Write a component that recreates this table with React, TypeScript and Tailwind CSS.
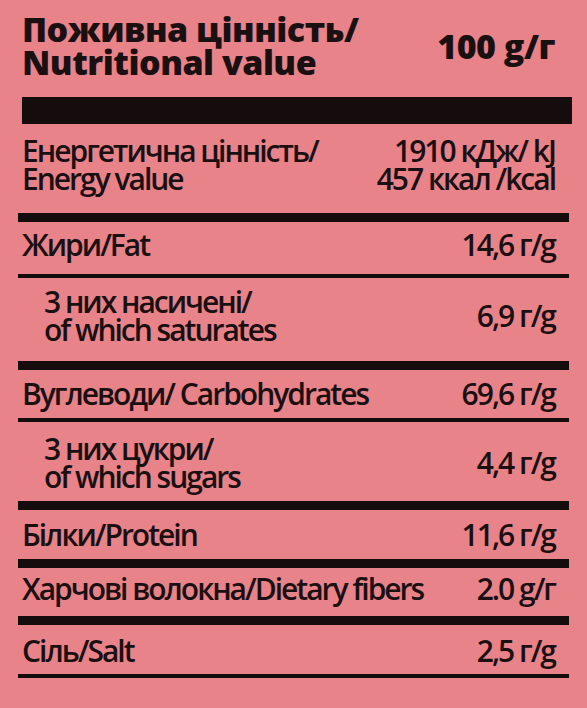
type Row = {
  label: string[];
  value: string[];
  pad: string;
  indent?: boolean;
  bar: "thick" | "thin";
};

const rows: Row[] = [
  {
    label: ["Енергетична цінність/", "Energy value"],
    value: ["1910 кДж/ kJ", "457 ккал /kcal"],
    pad: "pt-[13px] pb-[20px]",
    bar: "thick",
  },
  { label: ["Жири/Fat"], value: ["14,6 г/g"], pad: "pt-[9px] pb-[15px]", bar: "thin" },
  {
    label: ["3 них насичені/", "of which saturates"],
    value: ["6,9 г/g"],
    pad: "pt-[10px] pb-[17px]",
    indent: true,
    bar: "thick",
  },
  { label: ["Вуглеводи/ Carbohydrates"], value: ["69,6 г/g"], pad: "pt-[10px] pb-[10px]", bar: "thin" },
  {
    label: ["3 них цукри/", "of which sugars"],
    value: ["4,4 г/g"],
    pad: "pt-[13px] pb-[10px]",
    indent: true,
    bar: "thick",
  },
  { label: ["Білки/Protein"], value: ["11,6 г/g"], pad: "pt-[11px] pb-[10px]", bar: "thick" },
  { label: ["Харчові волокна/Dietary fibers"], value: ["2.0 g/г"], pad: "pt-[7px] pb-[13px]", bar: "thick" },
  { label: ["Сіль/Salt"], value: ["2,5 г/g"], pad: "pt-[12px] pb-[9px]", bar: "thin" },
];

function NutrientRow({ row }: { row: Row }) {
  return (
    <>
      <div className={`flex items-center justify-between pr-[14px] ${row.indent ? "pl-[26px]" : "pl-[4px]"} ${row.pad}`}>
        <div>
          {row.label.map((l) => (
            <div key={l}>{l}</div>
          ))}
        </div>
        <div className="text-right">
          {row.value.map((v) => (
            <div key={v}>{v}</div>
          ))}
        </div>
      </div>
      <div className={row.bar === "thick" ? "h-[9px] bg-[#150c0e]" : "h-[4px] bg-[#150c0e]"} />
    </>
  );
}

export default function App() {
  return (
    <div className="min-h-screen w-full bg-[#e8838a] font-['Open_Sans',sans-serif] text-[#1a1012]">
      <div className="px-[18px]">
        {/* Heading */}
        <div className="flex items-center justify-between pl-[4px] pr-[14px] pt-[13px] pb-[18px] text-[34px] font-extrabold leading-[33px] tracking-[-0.5px]">
          <div>
            <div>Поживна цінність/</div>
            <div>Nutritional value</div>
          </div>
          <div>100 g/г</div>
        </div>
        <div className="ml-[4px] -mr-[3px] h-[27px] bg-[#150c0e]" />

        <div className="text-[30px] font-semibold leading-[28px] tracking-[-2px]">
          {rows.map((row) => (
            <NutrientRow key={row.label[0]} row={row} />
          ))}
        </div>
      </div>
    </div>
  );
}
